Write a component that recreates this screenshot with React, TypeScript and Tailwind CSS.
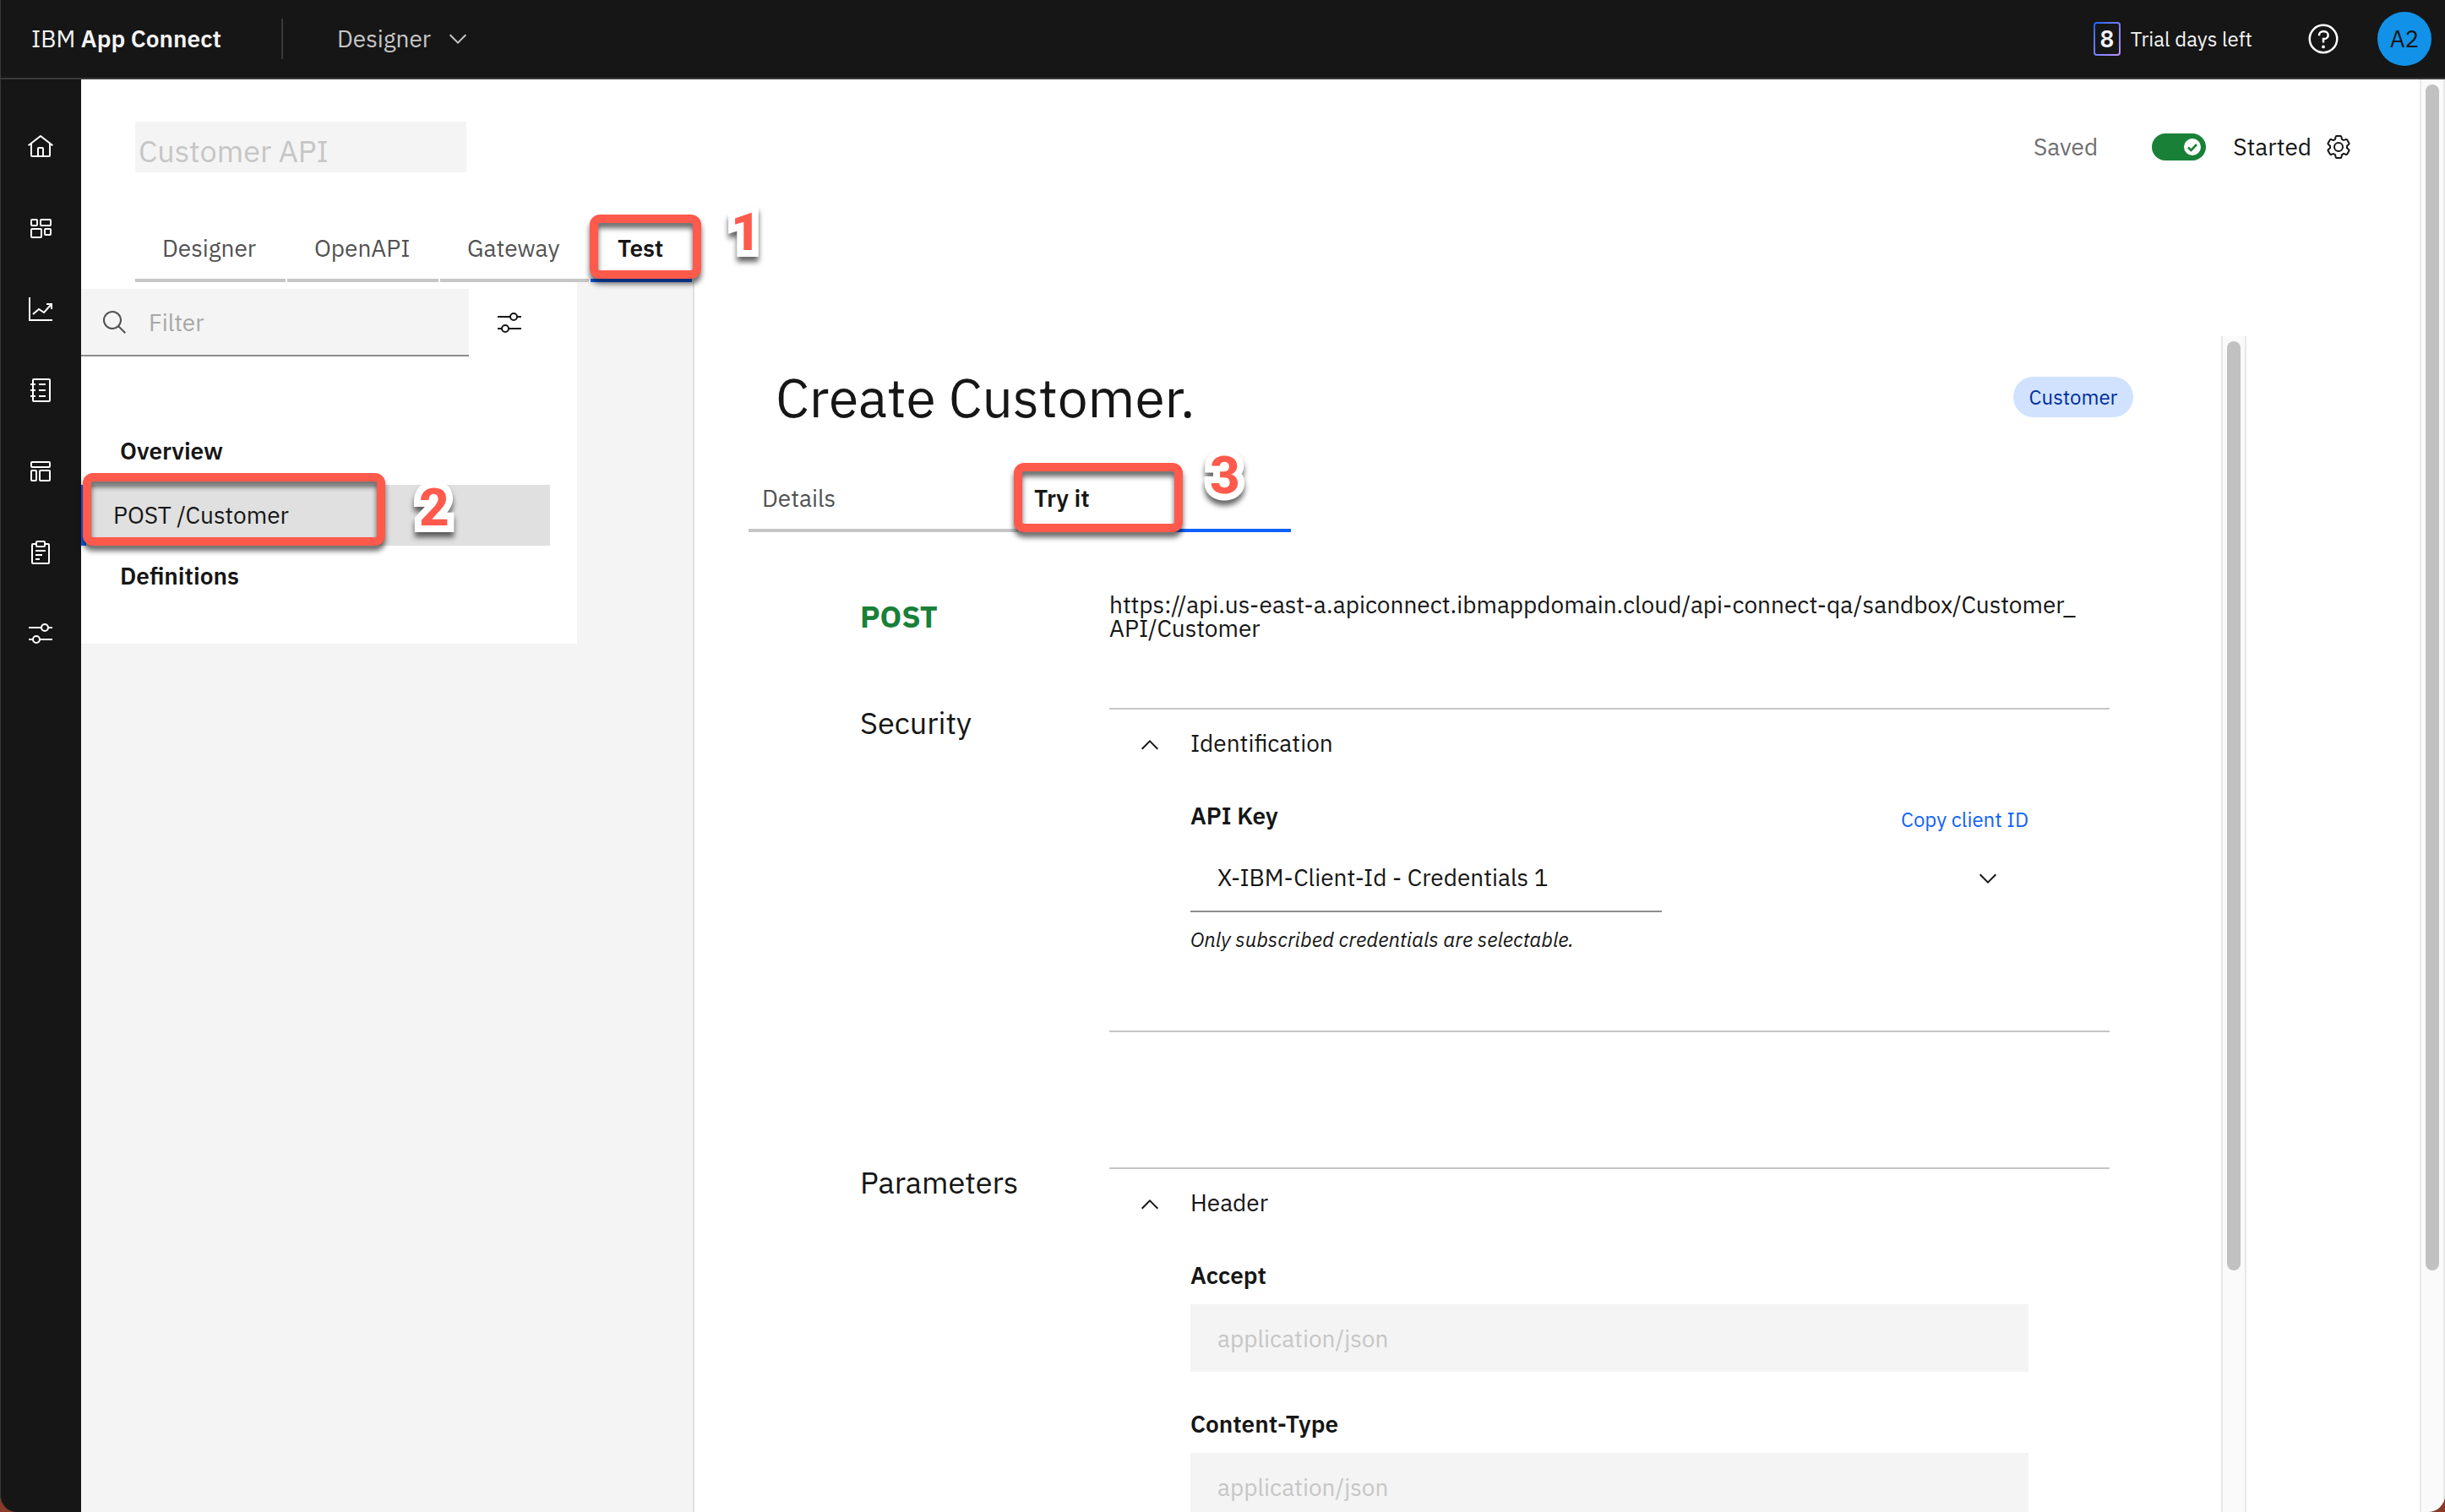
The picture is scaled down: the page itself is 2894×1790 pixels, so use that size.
import type { ReactNode } from "react";

function Icon({ children, className = "" }: { children: ReactNode; className?: string }) {
  return (
    <svg
      viewBox="0 0 32 32"
      className={`size-8 shrink-0 ${className}`}
      fill="none"
      stroke="currentColor"
      strokeWidth="2"
      aria-hidden="true"
    >
      {children}
    </svg>
  );
}

const HomeIcon = () => (
  <Icon>
    <path
      fill="currentColor"
      stroke="none"
      d="M16.6123,2.2138a1.01,1.01,0,0,0-1.2427,0L1,13.4194l1.2427,1.5717L4,13.6208V26a2.0041,2.0041,0,0,0,2,2H26a2.0037,2.0037,0,0,0,2-2V13.63L29.7573,15,31,13.4282ZM18,26H14V18h4Zm2,0V18a2.0023,2.0023,0,0,0-2-2H14a2.002,2.002,0,0,0-2,2v8H6V12.0615l10-7.79,10,7.8005V26Z"
    />
  </Icon>
);

const DashboardIcon = () => (
  <Icon>
    <rect x="5" y="6" width="7" height="7" rx="1" />
    <rect x="16" y="6" width="12" height="7" rx="1" />
    <rect x="5" y="17" width="12" height="10" rx="1" />
    <rect x="21" y="17" width="7" height="7" rx="1" />
  </Icon>
);

const ChartIcon = () => (
  <Icon>
    <path d="M3 2V29H30M7 22L14 16L20 20L28.5 10.5M23 10H29V16" />
  </Icon>
);

const CatalogIcon = () => (
  <Icon>
    <rect x="7" y="3" width="20" height="26" rx="1" />
    <path d="M4 9H10M4 16H10M4 23H10M14 9H22M14 16H22M14 23H22" />
  </Icon>
);

const TemplateIcon = () => (
  <Icon>
    <rect x="5" y="5" width="22" height="6" rx="1" />
    <rect x="5" y="15" width="6" height="12" rx="1" />
    <rect x="15" y="15" width="12" height="12" rx="1" />
  </Icon>
);

const ClipboardIcon = () => (
  <Icon>
    <path d="M10 6H7A1 1 0 0 0 6 7V28A1 1 0 0 0 7 29H25A1 1 0 0 0 26 28V7A1 1 0 0 0 25 6H22" />
    <rect x="11" y="3" width="10" height="6" rx="1" />
    <path d="M10 14H22M10 19H18M10 24H15" />
  </Icon>
);

const AdjustIcon = () => (
  <Icon>
    <path d="M2 9H17M25 9H30M2 23H7M15 23H30" />
    <circle cx="21" cy="9" r="4" />
    <circle cx="11" cy="23" r="4" />
  </Icon>
);

const SearchIcon = () => (
  <Icon className="text-[#525252]">
    <path
      fill="currentColor"
      stroke="none"
      d="M29,27.5859l-7.5521-7.5521a11.0177,11.0177,0,1,0-1.4141,1.4141L27.5859,29ZM4,13a9,9,0,1,1,9,9A9.01,9.01,0,0,1,4,13Z"
    />
  </Icon>
);

const ChevronDown = ({ className = "" }: { className?: string }) => (
  <Icon className={className}>
    <path d="M6.7 11.3L16 20.6L25.3 11.3" />
  </Icon>
);

const ChevronUp = () => (
  <Icon>
    <path d="M6.7 22.7L16 13.4L25.3 22.7" />
  </Icon>
);

const HelpIcon = () => (
  <svg viewBox="0 0 32 32" className="size-10" fill="currentColor" aria-hidden="true">
    <path d="M16,2A14,14,0,1,0,30,16,14,14,0,0,0,16,2Zm0,26A12,12,0,1,1,28,16,12,12,0,0,1,16,28Z" />
    <circle cx="16" cy="23.5" r="1.5" />
    <path d="M17,8H15.5A4.49,4.49,0,0,0,11,12.5V13h2v-.5A2.5,2.5,0,0,1,15.5,10H17a2.5,2.5,0,0,1,0,5H15v4.5h2V17a4.5,4.5,0,0,0,0-9Z" />
  </svg>
);

const GearIcon = () => (
  <Icon>
    <path
      fill="currentColor"
      stroke="none"
      d="M27,16.76c0-.25,0-.5,0-.76s0-.51,0-.77l1.92-1.68A2,2,0,0,0,29.3,11L26.94,7a2,2,0,0,0-1.73-1,2,2,0,0,0-.64.1l-2.43.82a11.35,11.35,0,0,0-1.31-.75l-.51-2.52a2,2,0,0,0-2-1.61H13.64a2,2,0,0,0-2,1.61l-.51,2.52a11.48,11.48,0,0,0-1.32.75L7.43,6.06A2,2,0,0,0,6.79,6,2,2,0,0,0,5.06,7L2.7,11a2,2,0,0,0,.41,2.51L5,15.24c0,.25,0,.5,0,.76s0,.51,0,.77L3.11,18.45A2,2,0,0,0,2.7,21L5.06,25a2,2,0,0,0,1.73,1,2,2,0,0,0,.64-.1l2.43-.82a11.35,11.35,0,0,0,1.31.75l.51,2.52a2,2,0,0,0,2,1.61h4.72a2,2,0,0,0,2-1.61l.51-2.52a11.48,11.48,0,0,0,1.32-.75l2.42.82a2,2,0,0,0,.64.1,2,2,0,0,0,1.73-1L29.3,21a2,2,0,0,0-.41-2.51ZM25.21,24l-3.43-1.16a8.86,8.86,0,0,1-2.71,1.57L18.36,28H13.64l-.71-3.55a9.36,9.36,0,0,1-2.7-1.57L6.79,24,4.43,20l2.72-2.4a8.9,8.9,0,0,1,0-3.13L4.43,12,6.79,8l3.43,1.16a8.86,8.86,0,0,1,2.71-1.57L13.64,4h4.72l.71,3.55a9.36,9.36,0,0,1,2.7,1.57L25.21,8,27.57,12l-2.72,2.4a8.9,8.9,0,0,1,0,3.13L27.57,20Z"
    />
    <circle cx="16" cy="16" r="5" />
  </Icon>
);

/* Red callout frame laid over the control it points at. */
function Callout({ className }: { className: string }) {
  return (
    <span
      aria-hidden="true"
      className={`pointer-events-none absolute z-10 rounded-xl border-[10px] border-[#ff5a4c] drop-shadow-[0_6px_3px_rgba(0,0,0,0.6)] ${className}`}
    />
  );
}

function Step({ n, className }: { n: number; className: string }) {
  return (
    <span
      className={`pointer-events-none absolute z-10 font-[Roboto,sans-serif] text-[62px] leading-none font-extrabold text-[#ff5a4c] drop-shadow-[0_6px_3px_rgba(0,0,0,0.6)] [-webkit-text-stroke:16px_white] [paint-order:stroke_fill] [stroke-linejoin:round] ${className}`}
    >
      {n}
    </span>
  );
}

function Scrollbar({ thumb }: { thumb: string }) {
  return (
    <div className="flex w-[30px] shrink-0 justify-center border-x-2 border-[#e8e8e8] bg-[#fafafa] pt-1.5">
      <div className={`w-4 rounded-full bg-[#c1c1c1] ${thumb}`} />
    </div>
  );
}

const navItems = [
  { label: "Home", icon: <HomeIcon /> },
  { label: "Dashboard", icon: <DashboardIcon /> },
  { label: "Usage", icon: <ChartIcon /> },
  { label: "Catalog", icon: <CatalogIcon /> },
  { label: "Templates", icon: <TemplateIcon /> },
  { label: "Logs", icon: <ClipboardIcon /> },
  { label: "Settings", icon: <AdjustIcon /> },
];

const pageTabs = [
  { label: "Designer", width: "w-[178px]" },
  { label: "OpenAPI", width: "w-[179px]" },
  { label: "Gateway", width: "w-[176px]" },
];

const headerFields = ["Accept", "Content-Type"];

function TopBar() {
  return (
    <header className="flex h-[94px] shrink-0 items-center border-b-2 border-[#393939] pr-4 text-[#f4f4f4]">
      <div className="w-[332px] pl-9">
        IBM <span className="font-semibold">App Connect</span>
      </div>
      <div className="h-12 w-0.5 bg-[#393939]" />
      <button type="button" className="ml-16 flex items-center gap-4 text-[#c6c6c6]">
        Designer
        <ChevronDown />
      </button>
      <div className="ml-auto flex items-center">
        <span className="rounded-sm bg-linear-to-br from-[#0f62fe] to-[#be95ff] p-0.5">
          <span className="flex h-9 w-7 items-center justify-center rounded-xs bg-[#161616] font-semibold">8</span>
        </span>
        <span className="ml-3 text-2xl">Trial days left</span>
        <button type="button" aria-label="Help" className="ml-16 text-white">
          <HelpIcon />
        </button>
        <button
          type="button"
          className="ml-11 flex size-16 items-center justify-center rounded-full bg-[#1192e8] text-[#161616]"
        >
          A2
        </button>
      </div>
    </header>
  );
}

function TitleRow() {
  return (
    <div className="flex h-[60px] items-center justify-between pr-20 pl-16">
      <input
        aria-label="API name"
        disabled
        defaultValue="Customer API"
        className="h-full w-[392px] bg-[#f4f4f4] pt-2 pl-1 text-4xl leading-9 text-[#c6c6c6]"
      />
      <div className="flex items-center">
        <span className="text-[#6f6f6f]">Saved</span>
        <label className="ml-16 flex items-center gap-8">
          <span className="relative flex h-8 w-16 items-center justify-end rounded-full bg-[#198038] pr-1.5">
            <input type="checkbox" role="switch" defaultChecked className="absolute inset-0 appearance-none" />
            <svg viewBox="0 0 20 20" className="size-5" aria-hidden="true">
              <circle cx="10" cy="10" r="10" fill="white" />
              <path d="M5 10.5L8.5 14L15 7" fill="none" stroke="#198038" strokeWidth="2.6" />
            </svg>
          </span>
          Started
        </label>
        <button type="button" aria-label="Settings" className="ml-4">
          <GearIcon />
        </button>
      </div>
    </div>
  );
}

function PageTabs() {
  return (
    <div role="tablist" className="mt-[50px] flex h-20 gap-0.5 pl-16">
      {pageTabs.map((tab) => (
        <button
          key={tab.label}
          type="button"
          role="tab"
          className={`border-b-4 border-[#c6c6c6] pt-1 pl-8 text-left text-[#525252] ${tab.width}`}
        >
          {tab.label}
        </button>
      ))}
      <div className="relative flex">
        <button
          type="button"
          role="tab"
          aria-selected="true"
          className="w-[120px] border-b-4 border-[#0f62fe] pt-1 pl-8 text-left font-semibold"
        >
          Test
        </button>
        <Callout className="top-0 -left-px h-[76px] w-[132px]" />
        <Step n={1} className="-top-2.5 left-[166px]" />
      </div>
    </div>
  );
}

function OperationsPanel() {
  return (
    <aside className="w-[726px] shrink-0 border-r-2 border-[#e0e0e0] bg-[#f4f4f4]">
      <div className="w-[587px] bg-white pt-2 pb-11">
        <div className="flex">
          <label className="flex h-20 w-[459px] items-center gap-6 border-b-2 border-[#8d8d8d] bg-[#f4f4f4] pt-0.5 pl-6">
            <SearchIcon />
            <input
              aria-label="Filter"
              placeholder="Filter"
              className="min-w-0 flex-1 bg-transparent placeholder:text-[#a8a8a8]"
            />
          </label>
          <button type="button" aria-label="Filter options" className="flex w-24 items-center justify-center">
            <AdjustIcon />
          </button>
        </div>
        <nav className="mt-[72px]">
          <a href="#overview" className="flex h-20 items-center pl-[46px] font-semibold">
            Overview
          </a>
          <div className="relative mr-8">
            <a
              href="#post-customer"
              className="flex h-[72px] items-center border-l-[6px] border-[#0f62fe] bg-[#e0e0e0] pl-8"
            >
              POST /Customer
            </a>
            <Callout className="-top-3.5 left-0.5 h-[86px] w-[358px]" />
            <Step n={2} className="-top-1 left-[400px]" />
          </div>
          <a href="#definitions" className="flex h-[72px] items-center pl-[46px] font-semibold">
            Definitions
          </a>
        </nav>
      </div>
    </aside>
  );
}

function Section({
  title,
  heading,
  className = "",
  children,
}: {
  title: string;
  heading: string;
  className?: string;
  children: ReactNode;
}) {
  return (
    <section className="grid grid-cols-[295px_1fr]">
      <h2 className="text-4xl leading-9">{title}</h2>
      <div className={`border-t-2 border-[#c6c6c6] ${className}`}>
        <button type="button" aria-expanded="true" className="flex h-20 w-full items-center gap-8 pl-8">
          <ChevronUp />
          {heading}
        </button>
        <div className="px-24">{children}</div>
      </div>
    </section>
  );
}

function OperationDetail() {
  return (
    <main className="mr-[205px] flex min-w-0 flex-1">
      <div className="min-w-0 flex-1 overflow-hidden pt-8">
        <div className="flex h-20 items-center justify-between pr-[104px] pl-24">
          <h1 className="text-[64px] leading-[80px]">Create Customer.</h1>
          <span className="flex h-12 min-w-[142px] items-center justify-center rounded-full bg-[#d0e2ff] px-4 text-2xl text-[#002d9c]">
            Customer
          </span>
        </div>
        <div role="tablist" className="mt-10 flex h-20 gap-0.5 pl-16">
          <button
            type="button"
            role="tab"
            className="w-80 border-b-4 border-[#c6c6c6] pt-1 pl-4 text-left text-[#525252]"
          >
            Details
          </button>
          <div className="relative flex">
            <button
              type="button"
              role="tab"
              aria-selected="true"
              className="w-80 border-b-4 border-[#0f62fe] pt-1 pl-4 text-left font-semibold"
            >
              Try it
            </button>
            <Callout className="-top-0.5 -left-2 h-[82px] w-[200px]" />
            <Step n={3} className="-top-[18px] left-[224px]" />
          </div>
        </div>
        <div className="pt-[72px] pr-[132px] pl-[196px]">
          <div className="grid grid-cols-[295px_1fr]">
            <div className="pt-1 text-4xl leading-12 font-bold text-[#198038]">POST</div>
            <div className="leading-7">
              https://api.us-east-a.apiconnect.ibmappdomain.cloud/api-connect-qa/sandbox/Customer_
              <wbr />
              API/Customer
            </div>
          </div>
          <div className="mt-20 flex flex-col gap-40">
            <Section title="Security" heading="Identification" className="border-b-2 pb-[92px]">
              <div className="flex items-end justify-between pt-7">
                <label htmlFor="api-key" className="font-semibold">
                  API Key
                </label>
                <a href="#copy" className="text-2xl leading-7 text-[#0f62fe]">
                  Copy client ID
                </a>
              </div>
              <div className="relative mt-4">
                <select id="api-key" className="h-20 w-full appearance-none pb-0.5 pl-8">
                  <option>X-IBM-Client-Id - Credentials 1</option>
                </select>
                <ChevronDown className="pointer-events-none absolute top-6 right-8" />
                <div className="absolute bottom-0 left-0 h-0.5 w-9/16 bg-[#8d8d8d]" />
              </div>
              <p className="mt-4 text-2xl leading-8 italic">Only subscribed credentials are selectable.</p>
            </Section>
            <Section title="Parameters" heading="Header">
              <div className="flex flex-col gap-11 pt-7">
                {headerFields.map((name) => (
                  <label key={name} className="flex flex-col gap-4">
                    <span className="font-semibold">{name}</span>
                    <input
                      disabled
                      defaultValue="application/json"
                      className="h-20 bg-[#f4f4f4] px-8 text-[#c6c6c6]"
                    />
                  </label>
                ))}
              </div>
            </Section>
          </div>
        </div>
      </div>
      <Scrollbar thumb="h-[1100px]" />
    </main>
  );
}

export default function App() {
  return (
    <div className="h-screen bg-[#8a3a2a] font-['IBM_Plex_Sans','Noto_Sans',sans-serif] text-[28px] leading-9 text-[#161616]">
      <div className="flex h-full flex-col overflow-hidden rounded-b-[20px] border-l border-[#393939] bg-[#161616]">
        <TopBar />
        <div className="flex min-h-0 flex-1">
          <nav aria-label="Main" className="flex w-[95px] shrink-0 flex-col pt-8 pr-0.5 text-white">
            {navItems.map((item) => (
              <button
                key={item.label}
                type="button"
                aria-label={item.label}
                className="flex h-24 items-center justify-center"
              >
                {item.icon}
              </button>
            ))}
          </nav>
          <div className="flex min-w-0 flex-1 flex-col bg-white pt-[50px]">
            <TitleRow />
            <PageTabs />
            <div className="flex min-h-0 flex-1">
              <OperationsPanel />
              <div className="flex min-w-0 flex-1 pt-16">
                <OperationDetail />
              </div>
            </div>
          </div>
          <Scrollbar thumb="h-[1404px]" />
        </div>
      </div>
    </div>
  );
}
